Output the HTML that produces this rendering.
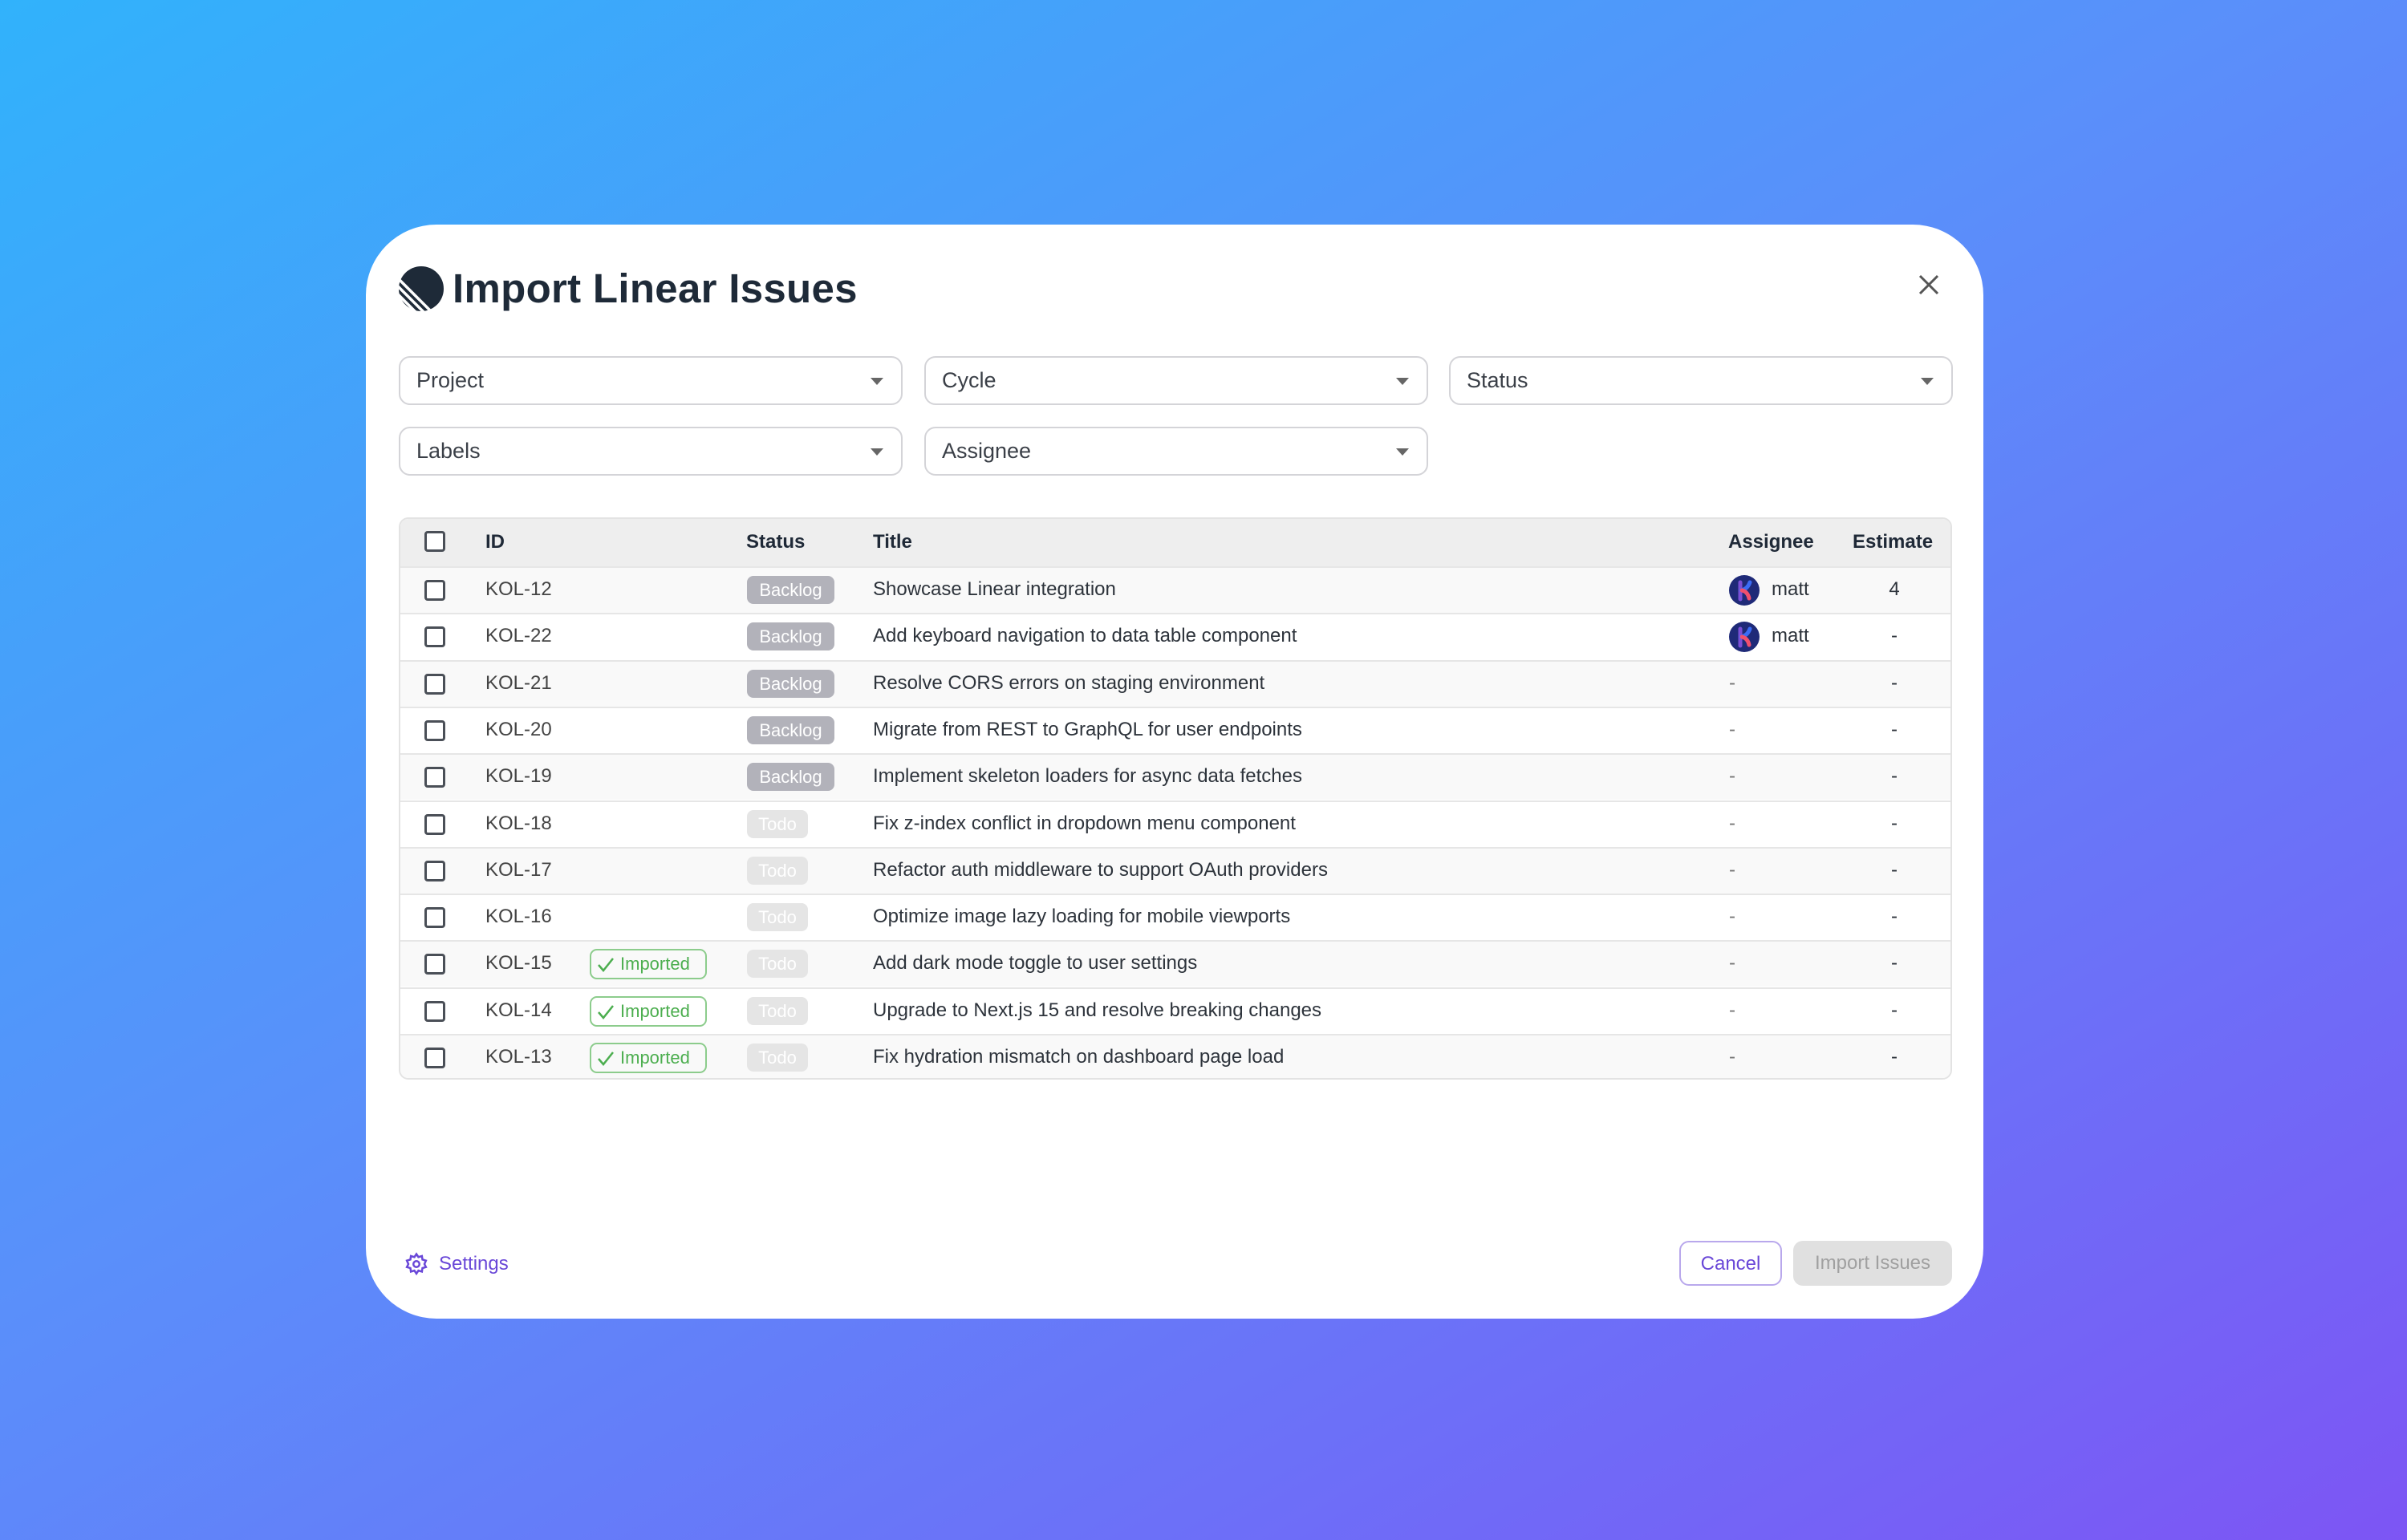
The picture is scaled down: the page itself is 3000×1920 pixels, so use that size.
<!DOCTYPE html>
<html><head><meta charset="utf-8"><style>
*{box-sizing:border-box;margin:0;padding:0}
body{width:3000px;height:1920px;overflow:hidden;font-family:"Liberation Sans",sans-serif;background:linear-gradient(150deg,#31b2fb 0%,#5a8ffa 45%,#6c70f8 75%,#7d55f4 100%);position:relative;color:#1f2937}
.modal{position:absolute;left:456px;top:280px;width:2016px;height:1364px;background:#fff;border-radius:88px}
.abs{position:absolute}
.title{left:108px;top:45px;font-size:51px;font-weight:bold;color:#1e2a38;letter-spacing:0.3px;line-height:70px}
.dd{position:absolute;height:61px;width:628px;border:2px solid #d4d4d8;border-radius:14px;font-size:27px;color:#3a3f47;padding-left:20px;line-height:57px}
.dd:after{content:"";position:absolute;right:22px;top:25px;border-left:8px solid transparent;border-right:8px solid transparent;border-top:9px solid #666}
.table{position:absolute;left:41px;top:365px;width:1936px;height:701px;border:2px solid #e3e3e3;border-radius:12px;overflow:hidden}
.row{position:absolute;left:0;width:100%;height:58px;border-top:2px solid #e6e6e6;font-size:24px;line-height:54px;color:#2d333b}
.row.g{background:#f9f9f9}
.hdr{position:absolute;left:0;top:0;width:100%;height:59px;background:#eeeeee;font-weight:bold;font-size:24px;line-height:57px;color:#1f2937}
.cb{position:absolute;left:30px;top:15px;width:26px;height:26px;border:3px solid #4a4f57;border-radius:4px;background:#fff}
.c{position:absolute;top:0}
.badge{position:absolute;top:10px;height:35px;border-radius:8px;color:#fff;font-size:22px;line-height:35px;text-align:center}
.bl{left:432px;width:109px;background:#b2b2ba}
.td{left:432px;width:76px;background:#e5e5e5}
.imp{position:absolute;left:236px;top:9px;width:146px;height:38px;border:2px solid #8ccc8c;border-radius:9px;color:#4cae4f;font-size:22px;line-height:34px;padding-left:36px}
.imp svg{position:absolute;left:6px;top:7px}
.av{position:absolute;left:1656px;top:9px;width:38px;height:38px;border-radius:50%;background:#1f2a78;overflow:hidden}
</style></head><body>
<div class="modal">
<svg class="abs" style="left:40px;top:51px" width="58" height="58" viewBox="0 0 58 58"><circle cx="29" cy="29" r="28" fill="#1e2a38"/><g stroke="#fff" stroke-width="3.5"><line x1="-2" y1="14" x2="44" y2="60"/><line x1="-4" y1="22" x2="36" y2="62"/><line x1="-6" y1="30" x2="28" y2="64"/></g></svg>
<div class="abs title">Import Linear Issues</div>
<svg class="abs" style="left:1935px;top:62px" width="26" height="26" viewBox="0 0 26 26"><path d="M2 2L24 24M24 2L2 24" stroke="#555" stroke-width="3"/></svg>
<div class="dd" style="left:41px;top:164px">Project</div>
<div class="dd" style="left:696px;top:164px">Cycle</div>
<div class="dd" style="left:1350px;top:164px">Status</div>
<div class="dd" style="left:41px;top:252px">Labels</div>
<div class="dd" style="left:696px;top:252px">Assignee</div>
<div class="table">
<div class="hdr"><div class="cb"></div><span class="c" style="left:106px">ID</span><span class="c" style="left:431px">Status</span><span class="c" style="left:589px">Title</span><span class="c" style="left:1655px">Assignee</span><span class="c" style="left:1810px">Estimate</span></div>
</div>
<div class="abs" style="left:48px;top:1281px"><svg width="30" height="30" viewBox="0 0 24 24" fill="none" stroke="#6a48d8" stroke-width="2"><circle cx="12" cy="12" r="3"/><path d="M12 2l2 3 3.5-1 .5 3.5 3.5 1-1.5 3.5 1.5 3-3.5 1-.5 3.5-3.5-1-2 3-2-3-3.5 1-.5-3.5-3.5-1 1.5-3-1.5-3.5 3.5-1 .5-3.5 3.5 1z"/></svg></div>
<div class="abs" style="left:91px;top:1281px;font-size:24px;color:#6a48d8;line-height:30px">Settings</div>
<div class="abs" style="left:1637px;top:1267px;width:128px;height:56px;border:2px solid #b9a8ec;border-radius:12px;color:#6a48d8;font-size:24px;text-align:center;line-height:54px">Cancel</div>
<div class="abs" style="left:1779px;top:1267px;width:198px;height:56px;background:#e0e0e0;border-radius:12px;color:#a0a0a0;font-size:24px;text-align:center;line-height:56px">Import Issues</div>
</div>
<script>
const rows=[["KOL-12","bl","Showcase Linear integration",1,"4",0],["KOL-22","bl","Add keyboard navigation to data table component",1,"-",0],["KOL-21","bl","Resolve CORS errors on staging environment",0,"-",0],["KOL-20","bl","Migrate from REST to GraphQL for user endpoints",0,"-",0],["KOL-19","bl","Implement skeleton loaders for async data fetches",0,"-",0],["KOL-18","td","Fix z-index conflict in dropdown menu component",0,"-",0],["KOL-17","td","Refactor auth middleware to support OAuth providers",0,"-",0],["KOL-16","td","Optimize image lazy loading for mobile viewports",0,"-",0],["KOL-15","td","Add dark mode toggle to user settings",0,"-",1],["KOL-14","td","Upgrade to Next.js 15 and resolve breaking changes",0,"-",1],["KOL-13","td","Fix hydration mismatch on dashboard page load",0,"-",1]];
let h="";rows.forEach((r,i)=>{h+=`<div class="row ${i%2==0?'g':''}" style="top:${59+i*58.3}px"><div class="cb"></div><span class="c" style="left:106px;color:#444">${r[0]}</span>${r[5]?'<div class="imp"><svg width="24" height="22" viewBox="0 0 24 22"><path d="M3 11l6 7L21 3" stroke="#4cae4f" stroke-width="2.5" fill="none"/></svg>Imported</div>':''}<div class="badge ${r[1]}">${r[1]=='bl'?'Backlog':'Todo'}</div><span class="c" style="left:589px">${r[2]}</span>${r[3]?'<div class="av"><svg width="38" height="38" viewBox="0 0 38 38"><path d="M14 9v21" stroke="#7a4fd6" stroke-width="5" stroke-linecap="round"/><path d="M26 9c-2 6-6 9-11 10" stroke="#3b6cf5" stroke-width="5" stroke-linecap="round" fill="none"/><path d="M16 19c5 1 8 5 9 10" stroke="#f0506e" stroke-width="5" stroke-linecap="round" fill="none"/></svg></div><span class="c" style="left:1709px">matt</span>':'<span class="c" style="left:1656px;color:#777">-</span>'}<span class="c" style="left:1842px;width:40px;text-align:center">${r[4]}</span></div>`});
document.querySelector('.table').insertAdjacentHTML('beforeend',h);
</script>
</body></html>
